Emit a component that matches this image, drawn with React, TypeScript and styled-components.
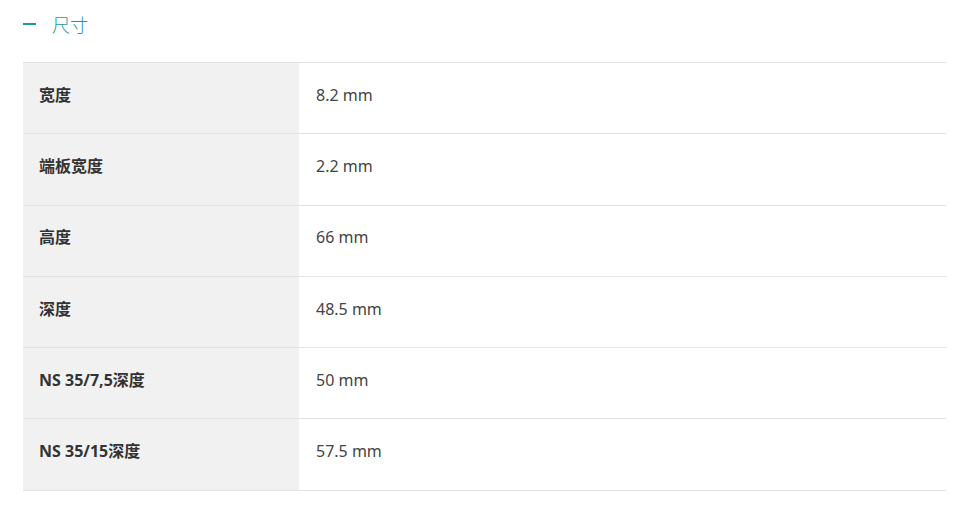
import React from 'react';
import styled, { createGlobalStyle } from 'styled-components';

const GlobalStyle = createGlobalStyle`
  html, body {
    margin: 0;
    padding: 0;
    background: #ffffff;
  }
  body {
    font-family: "Noto Sans", "Noto Sans CJK SC", sans-serif;
    color: #333333;
  }
`;

const Section = styled.section`
  padding: 11px 13px 0 23px;
`;

const Header = styled.div`
  display: flex;
  align-items: center;
  gap: 16px;
  height: 26px;
  margin-bottom: 25px;
`;

const Minus = styled.span`
  display: block;
  width: 13px;
  height: 2px;
  background: #1a9aa0;
`;

const Title = styled.h2`
  margin: 0;
  font-size: 18px;
  font-weight: 300;
  color: #1a9aa0;
  font-family: "Noto Sans CJK SC", sans-serif;
`;

const Table = styled.div`
  display: grid;
  grid-template-columns: 276px 1fr;
  border-top: 1px solid #e3e3e6;
`;

const Cell = styled.div<{ $label?: boolean }>`
  display: flex;
  align-items: center;
  box-sizing: border-box;
  height: 71.3px;
  padding-bottom: 7px;
  border-bottom: 1px solid #e3e3e6;
  padding-left: ${({ $label }) => ($label ? '16px' : '17px')};
  background: ${({ $label }) => ($label ? '#f1f1f1' : '#ffffff')};
  font-size: 16px;
  line-height: 20px;
  font-weight: ${({ $label }) => ($label ? 700 : 400)};
  color: ${({ $label }) => ($label ? '#333333' : '#444444')};
  font-family: "Noto Sans", "Noto Sans CJK SC", sans-serif;
`;

const rows: [string, string][] = [
  ['宽度', '8.2 mm'],
  ['端板宽度', '2.2 mm'],
  ['高度', '66 mm'],
  ['深度', '48.5 mm'],
  ['NS 35/7,5深度', '50 mm'],
  ['NS 35/15深度', '57.5 mm'],
];

const App: React.FC = () => {
  return (
    <>
      <GlobalStyle />
      <Section>
        <Header>
          <Minus />
          <Title>尺寸</Title>
        </Header>
        <Table>
          {rows.map(([label, value]) => (
            <React.Fragment key={label}>
              <Cell $label>{label}</Cell>
              <Cell>{value}</Cell>
            </React.Fragment>
          ))}
        </Table>
      </Section>
    </>
  );
};

export default App;
